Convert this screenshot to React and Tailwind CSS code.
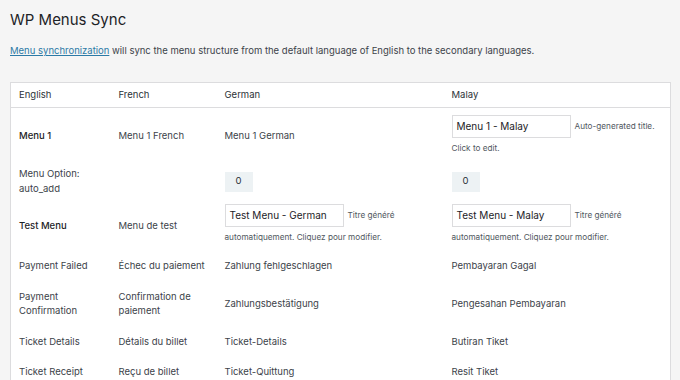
import React from "react";

function TitleInput({ value, note, noteRest }) {
  return (
    <div>
      <div className="flex items-center">
        <div className="w-[119px] h-[23px] border border-[#dcdcde] bg-white px-[4px] flex items-center text-[10px] text-[#1d2327] shrink-0">
          {value}
        </div>
        <span className="ml-[4px] text-[8.2px] text-[#50575e] whitespace-nowrap">{note}</span>
      </div>
      <div className="mt-[3px] leading-[14px] text-[8.2px] text-[#50575e] whitespace-nowrap">{noteRest}</div>
    </div>
  );
}

function Zero() {
  return (
    <div className="w-[28px] h-[20px] bg-[#edf2f4] flex items-center justify-center text-[9.5px] text-[#2c3338]">
      0
    </div>
  );
}

const rows = [
  ["Payment Failed", "Échec du paiement", "Zahlung fehlgeschlagen", "Pembayaran Gagal"],
  [
    <>Payment<br />Confirmation</>,
    <>Confirmation de<br />paiement</>,
    "Zahlungsbestätigung",
    "Pengesahan Pembayaran",
  ],
  ["Ticket Details", "Détails du billet", "Ticket-Details", "Butiran Tiket"],
  ["Ticket Receipt", "Reçu de billet", "Ticket-Quittung", "Resit Tiket"],
];

export default function App() {
  const td = "pl-[8px] pr-[4px] py-[8px] align-middle leading-[14.5px]";
  const td1 = "pl-[8px] pr-[4px] pt-[11px] pb-[5px] align-middle leading-[14.5px]";
  const td2 = "pl-[8px] pr-[4px] pt-[8px] pb-[5px] align-middle leading-[14.5px]";
  return (
    <div className="min-h-screen w-[680px] h-[380px] overflow-hidden bg-[#f5f5f5] font-['Inter',sans-serif] text-[9.5px] text-[#3c434a]">
      <div className="px-[10px] pt-[8px]">
        <h1 className="text-[15px] leading-[24px] font-normal text-[#1d2327]">WP Menus Sync</h1>
        <p className="mt-[11px] leading-[16px] text-[9.5px] text-[#3c434a] whitespace-nowrap">
          <a className="text-[#2c7aa6] underline underline-offset-1">Menu synchronization</a> will sync the menu
          structure from the default language of English to the secondary languages.
        </p>
        <table className="mt-[23px] w-[660px] table-fixed border-collapse border border-[#dcdcde] bg-white">
          <colgroup>
            <col className="w-[100px]" />
            <col className="w-[106px]" />
            <col className="w-[227px]" />
            <col className="w-[227px]" />
          </colgroup>
          <thead>
            <tr className="border-b border-[#dcdcde]">
              <th className="h-[25px] pl-[8px] text-left font-normal text-[#2c3338] leading-[14px]">English</th>
              <th className="h-[25px] pl-[8px] text-left font-normal text-[#2c3338] leading-[14px]">French</th>
              <th className="h-[25px] pl-[8px] text-left font-normal text-[#2c3338] leading-[14px]">German</th>
              <th className="h-[25px] pl-[8px] text-left font-normal text-[#2c3338] leading-[14px]">Malay</th>
            </tr>
          </thead>
          <tbody>
            <tr>
              <td className={`${td1} font-medium text-[#1d2327]`}>Menu 1</td>
              <td className={td1}>Menu 1 French</td>
              <td className={td1}>Menu 1 German</td>
              <td className={`${td} pt-[7px] pb-[4px]`}>
                <TitleInput value="Menu 1 - Malay" note="Auto-generated title." noteRest="Click to edit." />
              </td>
            </tr>
            <tr>
              <td className={td2}>
                Menu Option:
                <br />
                auto_add
              </td>
              <td className={td2}></td>
              <td className={td2}>
                <Zero />
              </td>
              <td className={td2}>
                <Zero />
              </td>
            </tr>
            <tr>
              <td className={`${td} font-medium text-[#1d2327]`}>Test Menu</td>
              <td className={td}>Menu de test</td>
              <td className={`${td} pt-[3px] pb-[7px]`}>
                <TitleInput
                  value="Test Menu - German"
                  note="Titre généré"
                  noteRest="automatiquement. Cliquez pour modifier."
                />
              </td>
              <td className={`${td} pt-[3px] pb-[7px]`}>
                <TitleInput
                  value="Test Menu - Malay"
                  note="Titre généré"
                  noteRest="automatiquement. Cliquez pour modifier."
                />
              </td>
            </tr>
            {rows.map((r, i) => (
              <tr key={i}>
                {r.map((c, j) => (
                  <td key={j} className={td}>
                    {c}
                  </td>
                ))}
              </tr>
            ))}
          </tbody>
        </table>
      </div>
    </div>
  );
}
